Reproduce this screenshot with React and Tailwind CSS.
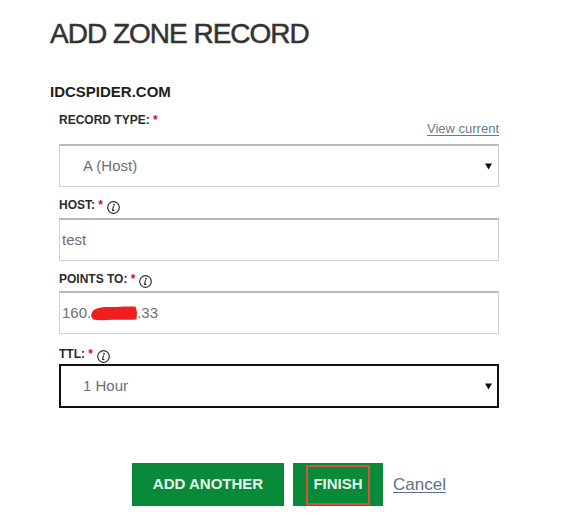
import React from 'react'

const sans = { fontFamily: '"Liberation Sans", Arial, sans-serif' }

function InfoGlyph() {
  return (
    <svg width="13" height="13" viewBox="0 0 13 13" fill="none" aria-hidden="true" className="mt-[3px]">
      <circle cx="6.5" cy="6.5" r="5.8" stroke="#333" strokeWidth="1.2" />
      <circle cx="7" cy="3.7" r="0.9" fill="#333" />
      <path d="M6.4 5.6l-0.9 3.8h1.3" stroke="#333" strokeWidth="1.2" strokeLinecap="round" strokeLinejoin="round" />
    </svg>
  )
}

function Caret() {
  return (
    <svg width="7" height="7" viewBox="0 0 7 7" aria-hidden="true">
      <path d="M0 0.5h7L3.5 6.5z" fill="#111" />
    </svg>
  )
}

function Scribble() {
  return (
    <svg width="46" height="15" viewBox="0 0 46 15" aria-hidden="true" className="inline-block align-[-2px]">
      <path
        d="M1 6C3 3 7 1.5 12 1.2C19 0.6 27 1.4 33 0.6L44.5 0.4L46 6L45.5 13.5C38 14.2 30 13.4 22 13.8C15 14.4 8 14.6 2 13.6L0 10Z"
        fill="#f01f1f"
      />
    </svg>
  )
}

function Label({ children, info, className }) {
  return (
    <div className={'flex h-[14px] items-start gap-[4px] text-[12px] font-bold leading-none text-[#2b2b2b] ' + (className || '')}>
      <span className="pt-[1px]">
        {children} <span className="text-[#c8102e]">*</span>
      </span>
      {info ? <InfoGlyph /> : null}
    </div>
  )
}

export default function App() {
  return (
    <main className="min-h-screen bg-white pl-[50px] pt-[20px] text-[#2b2b2b]" style={sans}>
      <h1 className="text-[28px] font-normal leading-none tracking-[-1px] text-[#333] [-webkit-text-stroke:0.5px_#333]">
        ADD ZONE RECORD
      </h1>
      <h2 className="mt-[36px] text-[15px] font-bold leading-none text-[#1e1e1e]">IDCSPIDER.COM</h2>

      <div className="ml-[9px] mt-[14px] w-[440px]">
        <div className="flex items-start justify-between">
          <Label>RECORD TYPE:</Label>
          <a href="#" className="mt-[9px] text-[13px] leading-none text-[#6b7a8f] underline underline-offset-2">
            View current
          </a>
        </div>
        <div className="mt-[9px] flex h-[43px] items-center justify-between border border-[#cfcfcf] border-t-2 border-t-[#b9b9b9] pl-[23px] pr-[6px] text-[15px] text-[#6f6f6f]">
          <span>A (Host)</span>
          <Caret />
        </div>

        <Label info className="mt-[11px]">HOST:</Label>
        <div className="mt-[6px] flex h-[43px] items-center border border-[#cfcfcf] border-t-2 border-t-[#b9b9b9] pl-[2px] text-[15px] text-[#6f6f6f]">
          test
        </div>

        <Label info className="mt-[11px]">POINTS TO:</Label>
        <div className="mt-[5px] flex h-[43px] items-center border border-[#cfcfcf] border-t-2 border-t-[#b9b9b9] pl-[2px] text-[15px] text-[#6f6f6f]">
          <span>160.</span>
          <Scribble />
          <span>.33</span>
        </div>

        <Label info className="mt-[13px]">TTL:</Label>
        <div className="mt-[3px] flex h-[44px] items-center justify-between border-2 border-[#111] pl-[22px] pr-[5px] text-[15px] text-[#6f6f6f]">
          <span>1 Hour</span>
          <Caret />
        </div>
      </div>

      <div className="ml-[82px] mt-[55px] flex items-center">
        <button className="flex h-[43px] w-[152px] items-center justify-center bg-[#088a38] text-[15px] font-bold text-[#e9f5ec]">
          ADD ANOTHER
        </button>
        <button className="ml-[9px] flex h-[43px] w-[90px] items-center justify-center bg-[#088a38] text-[15px] font-bold text-[#e9f5ec]">
          <span className="flex h-[40px] w-[64px] items-center justify-center border-2 border-[#d2553c]">FINISH</span>
        </button>
        <a href="#" className="ml-[10px] text-[17px] text-[#5f6f8c] underline underline-offset-2">
          Cancel
        </a>
      </div>
    </main>
  )
}
